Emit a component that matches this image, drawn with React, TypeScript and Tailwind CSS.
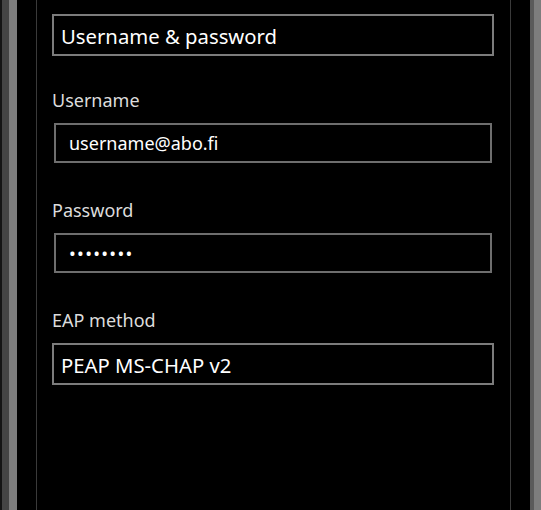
const font = { fontFamily: '"Noto Sans", "Open Sans", sans-serif' };

function Label({ text }: { text: string }) {
  return <div className="h-6 pt-[2px] text-[18px] leading-6 text-[#dcdcdc]">{text}</div>;
}

function Picker({ value, first }: { value: string; first?: boolean }) {
  return (
    <div
      className={`${first ? "mt-[17px]" : "mt-[13px]"} h-[42px] border-2 border-[#7c7c7c] px-[7px] pt-[3px] flex items-center text-[20.3px] text-white`}
    >
      {value}
    </div>
  );
}

function TextBox({ value, dots }: { value: string; dots?: boolean }) {
  return (
    <div className="mt-[13px] mx-[2px] h-[40px] border-2 border-[#6e6e6e] px-[13px] pt-[1px] flex items-center text-[18px] text-white">
      <span className={dots ? "tracking-[1.3px]" : ""}>{value}</span>
    </div>
  );
}

export default function App() {
  return (
    <div className="w-[541px] h-[510px] bg-black flex overflow-hidden" style={font}>
      <div className="w-[2px] bg-[#151515]" />
      <div className="w-[7px] bg-[#454545]" />
      <div className="w-[8px] bg-[#7d7d7d]" />
      <div className="w-[19px]" />
      <div className="w-px bg-[#3a3a3a]" />
      <div className="flex-1 pl-[15px] pr-[16px] -mt-[27px]">
        <Label text="Sign in using" />
        <Picker value="Username & password" first />
        <div className="mt-[30px]">
          <Label text="Username" />
          <TextBox value="username@abo.fi" />
        </div>
        <div className="mt-[33px]">
          <Label text="Password" />
          <TextBox value="••••••••" dots />
        </div>
        <div className="mt-[33px]">
          <Label text="EAP method" />
          <Picker value="PEAP MS-CHAP v2" />
        </div>
      </div>
      <div className="w-px bg-[#3a3a3a]" />
      <div className="w-[19px]" />
      <div className="w-[4px] bg-[#5a5a5a]" />
      <div className="w-[7px] bg-[#7d7d7d]" />
    </div>
  );
}
